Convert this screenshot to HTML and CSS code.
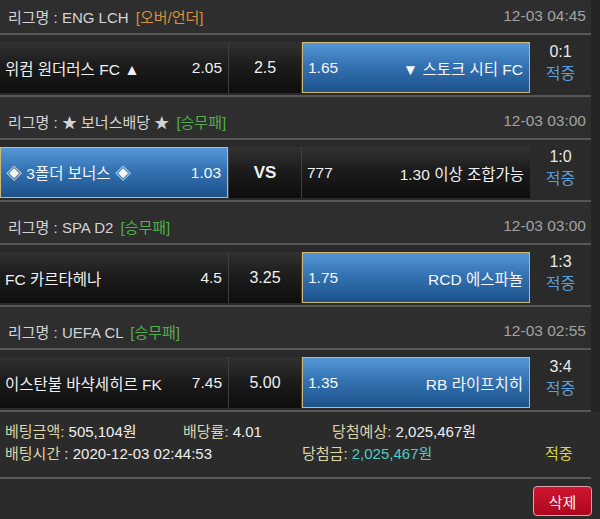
FILE: index.html
```html
<!DOCTYPE html>
<html lang="ko">
<head>
<meta charset="utf-8">
<link rel="stylesheet" href="styles.css">
</head>
<body>
<div class="page">
  <div class="list">
    <div class="league">
      <span class="lname">리그명 : ENG LCH <span class="tag ou">[오버/언더]</span></span>
      <span class="date">12-03 04:45</span>
    </div>
    <div class="match">
      <div class="cell side"><span>위컴 원더러스 FC ▲</span><span>2.05</span></div>
      <div class="cell mid">2.5</div>
      <div class="cell side sel"><span>1.65</span><span>▼ 스토크 시티 FC</span></div>
      <div class="result"><span>0:1</span><span class="hit">적중</span></div>
    </div>

    <div class="league">
      <span class="lname">리그명 : ★ 보너스배당 ★ <span class="tag wdl">[승무패]</span></span>
      <span class="date">12-03 03:00</span>
    </div>
    <div class="match">
      <div class="cell side sel"><span>◈ 3폴더 보너스 ◈</span><span>1.03</span></div>
      <div class="cell mid vs">VS</div>
      <div class="cell side"><span>777</span><span>1.30 이상 조합가능</span></div>
      <div class="result"><span>1:0</span><span class="hit">적중</span></div>
    </div>

    <div class="league">
      <span class="lname">리그명 : SPA D2 <span class="tag wdl">[승무패]</span></span>
      <span class="date">12-03 03:00</span>
    </div>
    <div class="match">
      <div class="cell side"><span>FC 카르타헤나</span><span>4.5</span></div>
      <div class="cell mid">3.25</div>
      <div class="cell side sel"><span>1.75</span><span>RCD 에스파뇰</span></div>
      <div class="result"><span>1:3</span><span class="hit">적중</span></div>
    </div>

    <div class="league">
      <span class="lname">리그명 : UEFA CL <span class="tag wdl">[승무패]</span></span>
      <span class="date">12-03 02:55</span>
    </div>
    <div class="match">
      <div class="cell side"><span>이스탄불 바샥세히르 FK</span><span>7.45</span></div>
      <div class="cell mid">5.00</div>
      <div class="cell side sel"><span>1.35</span><span>RB 라이프치히</span></div>
      <div class="result"><span>3:4</span><span class="hit">적중</span></div>
    </div>
  </div>

  <div class="summary">
    <div class="srow">
      <span class="f amount"><span class="lab">베팅금액:</span> 505,104원</span>
      <span class="f rate"><span class="lab">배당률:</span> 4.01</span>
      <span class="f expect"><span class="lab">당첨예상:</span> 2,025,467원</span>
    </div>
    <div class="srow">
      <span class="f time"><span class="lab">배팅시간</span> : 2020-12-03 02:44:53</span>
      <span class="f prize"><span class="lab">당첨금:</span> <span class="win">2,025,467원</span></span>
      <span class="f status">적중</span>
    </div>
  </div>

  <div class="actions">
    <button class="del" type="button">삭제</button>
  </div>
</div>
</body>
</html>
```
FILE: styles.css
```css
* { box-sizing: border-box; }
html, body {
  margin: 0;
  padding: 0;
  background: #2b2b2b;
  height: 100%;
  overflow: hidden;
}
body {
  font-family: "Liberation Sans", Arial, "Noto Sans CJK KR", sans-serif;
  color: #ededed;
}
.page {
  width: 600px;
}
.list {
  margin-top: -8px;
  background: #252525;
}
.league {
  width: 591px;
  height: 43px;
  display: flex;
  justify-content: space-between;
  align-items: center;
  padding: 7px 5px 0 8px;
  background: #2e2e2e;
  border-bottom: 2px solid #585858;
  font-size: 15px;
  color: #d4d4d4;
}
.tag { margin-left: 3px; }
.tag.ou { color: #d8913c; }
.tag.wdl { color: #52b04a; }
.date {
  color: #a2a2a2;
  font-size: 15.5px;
}
.match {
  width: 591px;
  display: flex;
  padding: 7px 0 2px;
  background: #2a2a2a;
  border-bottom: 2px solid #565656;
}
.cell {
  height: 51px;
  display: flex;
  align-items: center;
  font-size: 15.5px;
  color: #f0f0f0;
  background: linear-gradient(#323232, #1c1c1c 45%, #0e0e0e);
}
.side {
  width: 228px;
  justify-content: space-between;
  padding: 0 6px 0 5px;
  white-space: nowrap;
}
.mid {
  width: 74px;
  justify-content: center;
  border-left: 1px solid #3e3e3e;
  border-right: 1px solid #3e3e3e;
  font-size: 16px;
}
.mid.vs {
  font-weight: bold;
  font-size: 17px;
}
.sel {
  border: 1px solid #cdb974;
  background: linear-gradient(#5597d6, #3473b3 45%, #1d528b);
  color: #f6f6f6;
}
.result {
  width: 61px;
  height: 51px;
  display: flex;
  flex-direction: column;
  align-items: center;
  justify-content: center;
  font-size: 16px;
  line-height: 22px;
  padding-bottom: 9px;
  color: #e8e8e8;
}
.hit { color: #5c9dd7; }

.summary {
  width: 591px;
  padding: 9px 0 12px 5px;
  border-bottom: 2px solid #5a5a5a;
  font-size: 15px;
  line-height: 22px;
  color: #efefef;
}
.srow {
  display: flex;
  white-space: nowrap;
}
.lab { color: #dbd4a8; }
.amount { width: 178px; }
.rate { width: 149px; }
.time { width: 297px; }
.prize { width: 243px; }
.win { color: #4fcac1; }
.status { color: #d8d648; }

.actions {
  width: 592px;
  display: flex;
  justify-content: flex-end;
  padding-top: 7px;
}
.del {
  width: 59px;
  height: 30px;
  border: 1px solid #dca4ac;
  border-radius: 4px;
  background: linear-gradient(#d0142f, #ad0820);
  color: #f5f5f5;
  font-family: "Liberation Sans", Arial, "Noto Sans CJK KR", sans-serif;
  font-size: 15px;
  padding: 0;
}
```
